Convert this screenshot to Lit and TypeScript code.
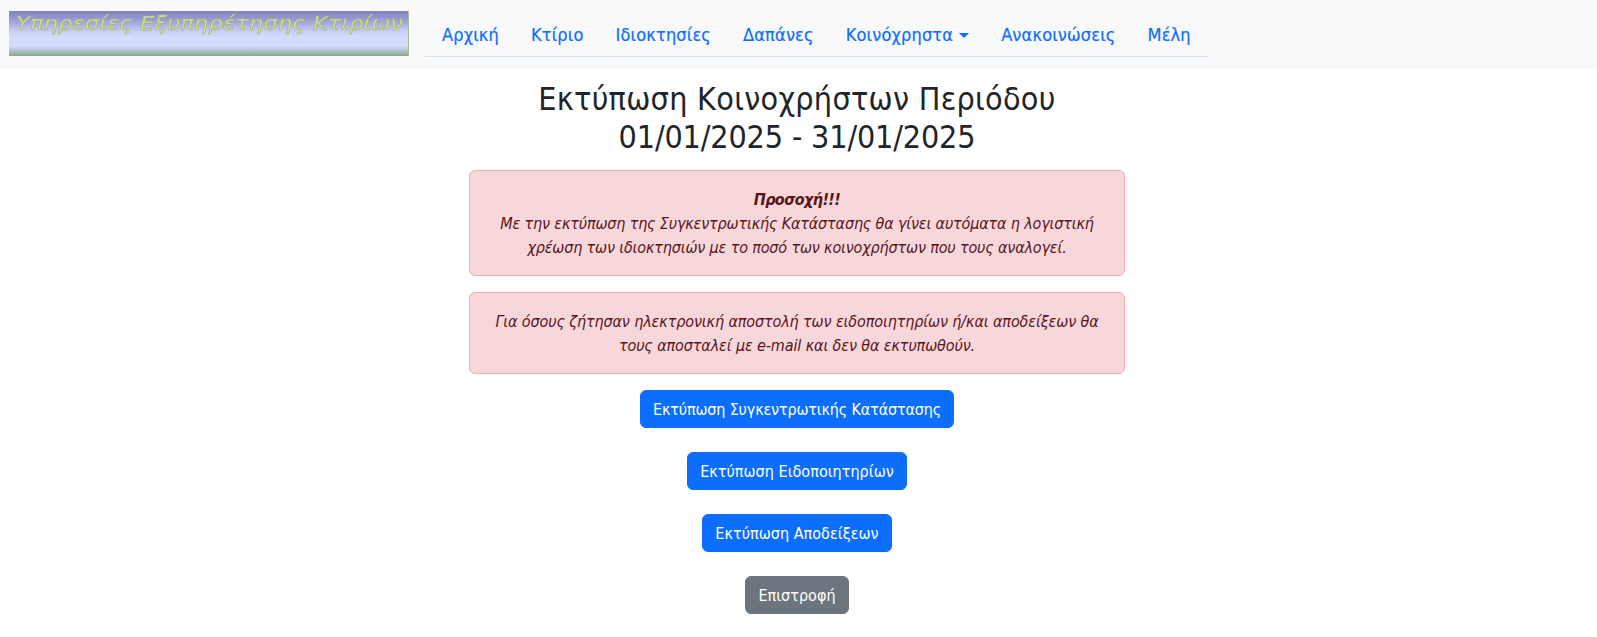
import { LitElement, html, css } from "lit";
import { customElement } from "lit/decorators.js";

@customElement("app-root")
export class AppRoot extends LitElement {
  static styles = css`
    :host { display: block; font-family: "DejaVu Sans Condensed", "DejaVu Sans", sans-serif; color: #212529; font-size: 16px; line-height: 24px; letter-spacing: -0.16px; }
    .navbar { display: flex; align-items: flex-start; height: 69px; background: #f8f9fa; box-sizing: border-box; padding: 11px 0 0 9px; }
    .logo { display: block; width: 400px; height: 45px; flex: none; }
    .logo text { font: italic 400 20px "DejaVu Sans", sans-serif; fill: #cfdf94; stroke: #a9ba7c; stroke-width: 0.4px; letter-spacing: 0; filter: drop-shadow(0.8px 0.8px 0.6px #8a9880); }
    .nav { display: flex; margin-left: 16px; padding-left: 1px; width: 784px; height: 46px; box-sizing: border-box; border-bottom: 1px solid #dee2e6; }
    .nav a { display: block; padding: 10px 16px 0; font-size: 18px; line-height: 27px; color: #0d6efd; text-decoration: none; white-space: nowrap; letter-spacing: 0.17px; -webkit-text-stroke: 0.2px #0d6efd; }
    .caret { display: inline-block; margin-left: 6px; vertical-align: 3px; border-top: 5.4px solid; border-left: 5.4px solid transparent; border-right: 5.4px solid transparent; }
    main { display: flex; flex-direction: column; align-items: center; padding-right: 3px; }
    h1 { margin: 11px 0 13px; font-size: 32px; line-height: 38.4px; font-weight: 400; text-align: center; }
    .wide { letter-spacing: 0.28px; }
    .alert { width: 656px; box-sizing: border-box; padding: 17px 16px 15px; margin-bottom: 16px; background: #f8d7da; border: 1px solid #f1aeb5; border-radius: 6px; color: #58151c; font-style: italic; text-align: center; }
    .alert b { letter-spacing: -0.6px; }
    .alert.loose { letter-spacing: -0.12px; }
    .btn { display: block; margin: 0 0 24px; padding: 7px 12px 5px; border-radius: 6px; border: 1px solid #0d6efd; background: #0d6efd; color: #fff; font: inherit; letter-spacing: 0.03px; white-space: nowrap; }
    .btn.long { letter-spacing: -0.16px; }
    .btn.sec { background: #6c757d; border-color: #6c757d; }
  `;
  render() {
    const links = ["Αρχική", "Κτίριο", "Ιδιοκτησίες", "Δαπάνες"];
    return html`
      <div class="navbar">
        <svg class="logo" viewBox="0 0 400 45" width="400" height="45">
          <defs>
            <linearGradient id="sky" x1="0" y1="0" x2="0" y2="1">
              <stop offset="0" stop-color="#7f82c0"></stop>
              <stop offset="0.2" stop-color="#9a9dd6"></stop>
              <stop offset="0.45" stop-color="#c6cff6"></stop>
              <stop offset="0.58" stop-color="#d2dcfc"></stop>
              <stop offset="0.78" stop-color="#d2dcfc"></stop>
              <stop offset="0.88" stop-color="#b4c0ce"></stop>
              <stop offset="1" stop-color="#8aa488"></stop>
            </linearGradient>
          </defs>
          <rect width="400" height="45" fill="url(#sky)"></rect>
          <rect x="399" width="1" height="45" fill="#a9c39c"></rect>
          <text x="7" y="18.5" textLength="387" lengthAdjust="spacingAndGlyphs">Υπηρεσίες Εξυπηρέτησης Κτιρίων</text>
        </svg>
        <nav class="nav">
          ${links.map((l) => html`<a href="#">${l}</a>`)}
          <a href="#">Κοινόχρηστα<span class="caret"></span></a>
          <a href="#">Ανακοινώσεις</a>
          <a href="#">Μέλη</a>
        </nav>
      </div>
      <main>
        <h1><span class="wide">Εκτύπωση Κοινοχρήστων Περιόδου</span><br />01/01/2025 - 31/01/2025</h1>
        <div class="alert"><b>Προσοχή!!!</b><br />Με την εκτύπωση της Συγκεντρωτικής Κατάστασης θα γίνει αυτόματα η λογιστική χρέωση των ιδιοκτησιών με το ποσό των κοινοχρήστων που τους αναλογεί.</div>
        <div class="alert loose">Για όσους ζήτησαν ηλεκτρονική αποστολή των ειδοποιητηρίων ή/και αποδείξεων θα τους αποσταλεί με e-mail και δεν θα εκτυπωθούν.</div>
        <button class="btn long">Εκτύπωση Συγκεντρωτικής Κατάστασης</button>
        <button class="btn">Εκτύπωση Ειδοποιητηρίων</button>
        <button class="btn">Εκτύπωση Αποδείξεων</button>
        <button class="btn sec">Επιστροφή</button>
      </main>
    `;
  }
}
